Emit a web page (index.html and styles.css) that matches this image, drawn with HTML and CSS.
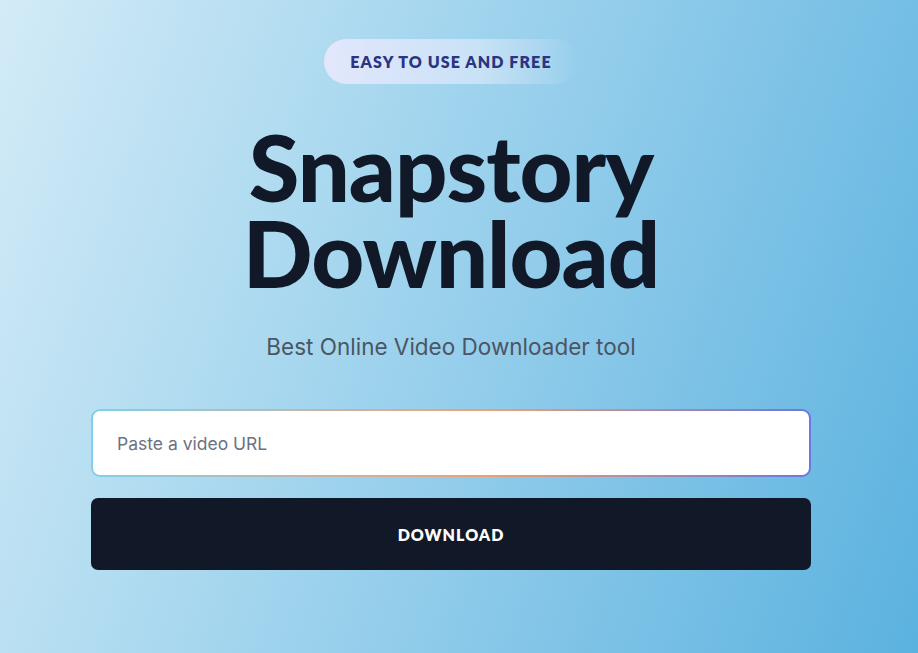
FILE: index.html
```html
<!DOCTYPE html>
<html lang="en">
<head>
<meta charset="utf-8">
<title>Snapstory Download</title>
<link rel="stylesheet" href="styles.css">
</head>
<body>
<main class="hero">
  <div class="badge">EASY TO USE AND FREE</div>
  <h1 class="title"><span class="line">Snapstory</span><span class="line">Download</span></h1>
  <p class="subtitle">Best Online Video Downloader tool</p>
  <form class="form">
    <div class="input-wrap">
      <input class="input" type="text" placeholder="Paste a video URL">
    </div>
    <button class="button" type="button">DOWNLOAD</button>
  </form>
</main>
</body>
</html>
```

FILE: styles.css
```css
html, body {
  margin: 0;
  height: 100%;
}
body {
  background: linear-gradient(110deg, #d3ebf7 0%, #a9d8ef 35%, #85c6e8 65%, #5bb2df 100%);
  font-family: "Inter", "Liberation Sans", sans-serif;
  padding-right: 16px;
  box-sizing: border-box;
  overflow: hidden;
}
.hero {
  width: 720px;
  margin: 0 auto;
  padding-top: 39px;
  display: flex;
  flex-direction: column;
  align-items: center;
}
.badge {
  height: 45px;
  box-sizing: border-box;
  padding: 0 26px;
  border-radius: 23px;
  display: flex;
  align-items: center;
  background: linear-gradient(90deg, #e3e7fc 0%, #c9e2f6 60%, rgba(180, 220, 242, 0) 100%);
  color: #2c3481;
  font-family: "Lato", "Inter", sans-serif;
  font-weight: 800;
  font-size: 16px;
  letter-spacing: 1.1px;
}
.title {
  margin: 40px 0 0;
  display: flex;
  flex-direction: column;
  align-items: center;
  font-family: "Lato", "Inter", sans-serif;
  font-weight: 900;
  font-size: 92px;
  letter-spacing: -1px;
  color: #111827;
  text-align: center;
}
.line {
  display: block;
  line-height: 86px;
}
.subtitle {
  margin: 37px 0 0;
  font-size: 22.5px;
  line-height: 28px;
  color: #4b5563;
}
.form {
  width: 100%;
  margin-top: 48px;
  display: flex;
  flex-direction: column;
  gap: 21px;
}
.input-wrap {
  padding: 2px;
  border-radius: 9px;
  background: linear-gradient(90deg, #7fd0ea 0%, #e0a98c 45%, #f0a070 55%, #6a78e0 100%);
}
.input {
  display: block;
  width: 100%;
  height: 64px;
  box-sizing: border-box;
  border: 0;
  border-radius: 7px;
  padding: 0 24px;
  font-family: "Inter", sans-serif;
  font-size: 17.5px;
  color: #111827;
  background: #fff;
  outline: none;
}
.input::placeholder {
  color: #6b7280;
}
.button {
  height: 72px;
  border: 0;
  border-radius: 7px;
  background: #111827;
  color: #fff;
  font-family: "Lato", "Inter", sans-serif;
  font-weight: 800;
  font-size: 16px;
  letter-spacing: 1px;
}
```
